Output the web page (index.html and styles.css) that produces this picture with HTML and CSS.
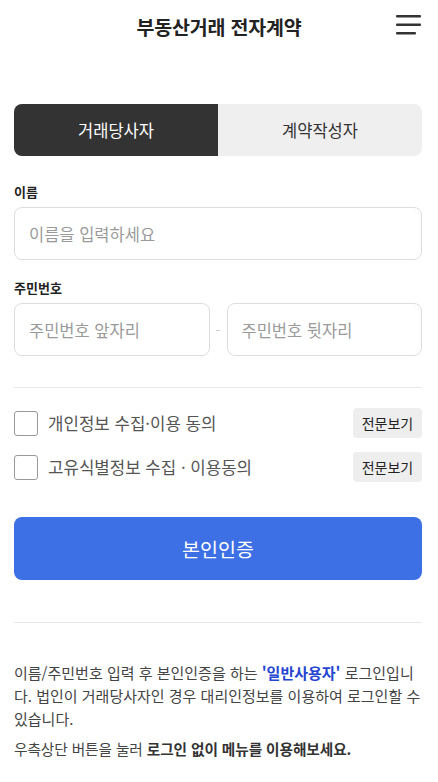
FILE: index.html
```html
<!DOCTYPE html>
<html lang="ko">
<head>
<meta charset="utf-8">
<title>부동산거래 전자계약</title>
<link rel="stylesheet" href="styles.css">
</head>
<body>
<header class="header">
  <h1 class="title">부동산거래 전자계약</h1>
  <button class="menu" aria-label="메뉴">
    <svg width="28" height="24" viewBox="0 0 28 24">
      <rect x="2" y="2" width="25" height="2.6" rx="1" fill="#333"/>
      <rect x="2" y="10.5" width="25" height="2.6" rx="1" fill="#333"/>
      <rect x="2" y="19" width="20" height="2.6" rx="1" fill="#333"/>
    </svg>
  </button>
</header>
<main class="content">
  <div class="tabs">
    <div class="tab active">거래당사자</div>
    <div class="tab">계약작성자</div>
  </div>

  <label class="label">이름</label>
  <div class="input">이름을 입력하세요</div>

  <label class="label label-2">주민번호</label>
  <div class="id-row">
    <div class="input">주민번호 앞자리</div>
    <span class="dash">-</span>
    <div class="input">주민번호 뒷자리</div>
  </div>

  <hr class="divider divider-1">

  <div class="agree">
    <div class="agree-row">
      <span class="check"></span>
      <span class="agree-text">개인정보 수집·이용 동의</span>
      <span class="view">전문보기</span>
    </div>
    <div class="agree-row">
      <span class="check"></span>
      <span class="agree-text">고유식별정보 수집 · 이용동의</span>
      <span class="view">전문보기</span>
    </div>
  </div>

  <button class="primary">본인인증</button>

  <hr class="divider divider-2">

  <p class="notice">이름/주민번호 입력 후 본인인증을 하는 <b class="blue">'일반사용자'</b> 로그인입니다. 법인이 거래당사자인 경우 대리인정보를 이용하여 로그인할 수 있습니다.</p>
  <p class="notice-link"><span>우측상단 버튼을 눌러 <b>로그인 없이 메뉴를 이용해보세요.</b></span></p>
</main>
</body>
</html>
```

FILE: styles.css
```css
* { box-sizing: border-box; }
html, body { margin: 0; padding: 0; background: #fff; }
body {
  font-family: "Noto Sans CJK KR", "Noto Sans", sans-serif;
  color: #333;
  width: 438px;
}
.header {
  position: relative;
  height: 52px;
  display: flex;
  align-items: center;
  justify-content: center;
}
.title {
  margin: 0;
  font-size: 19.5px;
  font-weight: 700;
  color: #222;
  letter-spacing: -0.2px;
}
.menu {
  position: absolute;
  right: 16px;
  top: 13px;
  border: 0;
  background: none;
  padding: 0;
  width: 28px;
  height: 24px;
}
.menu svg { display: block; }
.content {
  padding: 52px 16px 0 14px;
  display: flex;
  flex-direction: column;
}
.tabs {
  display: flex;
  height: 52px;
  border-radius: 8px;
  overflow: hidden;
  background: #efefef;
}
.tab {
  flex: 1;
  display: flex;
  align-items: center;
  justify-content: center;
  font-size: 16.5px;
  color: #333;
}
.tab.active { background: #333; color: #fff; }
.label {
  font-size: 13px;
  font-weight: 700;
  color: #222;
  margin-top: 26px;
  margin-bottom: 6px;
  line-height: 19px;
}
.label-2 { margin-top: 18px; }
.input {
  height: 53px;
  border: 1px solid #ddd;
  border-radius: 8px;
  padding: 0 14px;
  display: flex;
  align-items: center;
  font-size: 16.5px;
  color: #9a9a9a;
}
.id-row {
  display: flex;
  align-items: center;
}
.id-row .input { flex: 1; }
.dash {
  width: 17px;
  text-align: center;
  color: #ccc;
  font-size: 14px;
}
.divider {
  border: 0;
  border-top: 1px solid #e8e8e8;
  margin: 31px 0 0;
}
.agree {
  display: flex;
  flex-direction: column;
  gap: 14px;
  margin-top: 20px;
}
.agree-row {
  display: flex;
  align-items: center;
  height: 30px;
}
.check {
  width: 24px;
  height: 25px;
  border: 1px solid #999;
  border-radius: 3px;
  margin-right: 10px;
}
.agree-text {
  flex: 1;
  font-size: 16.8px;
  color: #555;
}
.view {
  background: #eee;
  border-radius: 4px;
  width: 69px;
  height: 30px;
  display: flex;
  align-items: center;
  justify-content: center;
  font-size: 14px;
  color: #222;
}
.primary {
  margin-top: 35px;
  height: 63px;
  border: 0;
  border-radius: 8px;
  background: #3d70e4;
  color: #fff;
  font-family: inherit;
  font-size: 19.5px;
}
.divider-2 { margin-top: 42px; }
.notice {
  margin: 38px 0 0;
  font-size: 15px;
  line-height: 23px;
  color: #444;
}
.blue { color: #2545d0; }
.notice-link {
  margin: 7px 0 0;
  font-size: 14.7px;
  line-height: 23px;
  color: #444;
  letter-spacing: -0.1px;
}
.notice-link span {
  border-bottom: 2px solid #999;
  padding-bottom: 1px;
}
.notice-link b { color: #333; }
```
